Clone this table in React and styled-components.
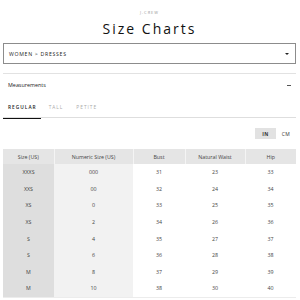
import React from 'react';
import styled, { createGlobalStyle } from 'styled-components';

const GlobalStyle = createGlobalStyle`
    body {
        margin: 0;
        background: #ffffff;
        font-family: "Open Sans", "Liberation Sans", sans-serif;
        color: #222;
    }
`;

const rows = [
    ['XXXS', '000', '31', '23', '33'],
    ['XXS', '00', '32', '24', '34'],
    ['XS', '0', '33', '25', '35'],
    ['XS', '2', '34', '26', '36'],
    ['S', '4', '35', '27', '37'],
    ['S', '6', '36', '28', '38'],
    ['M', '8', '37', '29', '39'],
    ['M', '10', '38', '30', '40']
];

const headers = ['Size (US)', 'Numeric Size (US)', 'Bust', 'Natural Waist', 'Hip'];
const widths = [51, 79, 52, 60, 51];

const App = () => (
    <Page>
        <GlobalStyle />
        <Brand>J.CREW</Brand>
        <Title>Size Charts</Title>
        <Select>
            <SelectLabel>WOMEN &gt; DRESSES</SelectLabel>
            <Caret />
        </Select>
        <Divider />
        <SectionRow>
            <SectionLabel>Measurements</SectionLabel>
            <Minus />
        </SectionRow>
        <Tabs>
            <Tab active>REGULAR</Tab>
            <Tab>TALL</Tab>
            <Tab>PETITE</Tab>
        </Tabs>
        <UnitRow>
            <Unit active>IN</Unit>
            <Unit>CM</Unit>
        </UnitRow>
        <Table>
            <colgroup>
                {widths.map((w, i) => (
                    <col key={i} style={{ width: w }} />
                ))}
            </colgroup>
            <thead>
                <tr>
                    {headers.map(h => (
                        <Th key={h}>{h}</Th>
                    ))}
                </tr>
            </thead>
            <tbody>
                {rows.map((r, i) => (
                    <tr key={i}>
                        {r.map((c, j) => (
                            <Td key={j} col={j}>
                                {c}
                            </Td>
                        ))}
                    </tr>
                ))}
            </tbody>
        </Table>
    </Page>
);

const Page = styled.div`
    width: 293px;
    padding: 0 4px 0 3px;
    display: flex;
    flex-direction: column;
`;

const Brand = styled.div`
    margin-top: 10px;
    text-align: center;
    font-size: 4px;
    line-height: 5px;
    letter-spacing: 1px;
    color: #999;
`;

const Title = styled.h1`
    margin: 4px 0 0;
    text-align: center;
    font-family: "Open Sans", sans-serif;
    font-weight: 400;
    font-size: 14px;
    line-height: 19px;
    letter-spacing: 2px;
    color: #111;
`;

const Select = styled.div`
    margin-top: 5px;
    height: 19px;
    border: 1px solid #8c8c8c;
    display: flex;
    align-items: center;
    justify-content: space-between;
    padding: 0 6px 0 5px;
`;

const SelectLabel = styled.span`
    font-size: 5.2px;
    letter-spacing: 0.7px;
    color: #222;
`;

const Caret = styled.span`
    width: 0;
    height: 0;
    border-left: 2px solid transparent;
    border-right: 2px solid transparent;
    border-top: 2.5px solid #222;
`;

const Divider = styled.div`
    margin-top: 9px;
    height: 1px;
    background: #e2e2e2;
`;

const SectionRow = styled.div`
    height: 22px;
    display: flex;
    align-items: center;
    justify-content: space-between;
    padding: 0 5px 0 5px;
`;

const SectionLabel = styled.span`
    font-size: 5.4px;
    color: #222;
`;

const Minus = styled.span`
    width: 4px;
    height: 1px;
    background: #555;
`;

const Tabs = styled.div`
    display: flex;
    border-bottom: 1.5px solid #dedede;
    height: 21px;
    align-items: stretch;
`;

const Tab = styled.div`
    display: flex;
    align-items: center;
    padding: 0 ${p => (p.active ? '4px' : '5px')} 0 ${p => (p.active ? '5px' : '8px')};
    min-width: ${p => (p.active ? '27px' : 'auto')};
    margin-bottom: -1.5px;
    border-bottom: 1.5px solid ${p => (p.active ? '#111' : 'transparent')};
    font-size: 4.8px;
    letter-spacing: 1px;
    font-weight: ${p => (p.active ? 600 : 400)};
    color: ${p => (p.active ? '#222' : '#aaa')};
`;

const UnitRow = styled.div`
    margin-top: 10px;
    display: flex;
    justify-content: flex-end;
`;

const Unit = styled.div`
    width: ${p => (p.active ? '21px' : '20px')};
    height: 11px;
    display: flex;
    align-items: center;
    justify-content: center;
    font-size: 5px;
    font-weight: ${p => (p.active ? 700 : 400)};
    letter-spacing: 0.5px;
    background: ${p => (p.active ? '#e2e2e2' : '#ffffff')};
    color: #333;
`;

const Table = styled.table`
    margin-top: 10px;
    width: 293px;
    border-collapse: collapse;
    table-layout: fixed;
    border-bottom: 1px solid #ececec;
`;

const Th = styled.th`
    height: 15px;
    padding: 0;
    background: #e5e5e5;
    border-right: 1px solid #f4f4f4;
    font-weight: 400;
    font-size: 5.3px;
    color: #444;
    text-align: center;
    &:last-child {
        border-right: 0;
    }
`;

const colBg = ['#dedede', '#f2f2f2', '#ffffff', '#ffffff', '#ffffff'];

const Td = styled.td`
    height: 16.6px;
    padding: 0;
    background: ${p => colBg[p.col]};
    font-size: 5.3px;
    color: #444;
    text-align: center;
`;

export default App;
